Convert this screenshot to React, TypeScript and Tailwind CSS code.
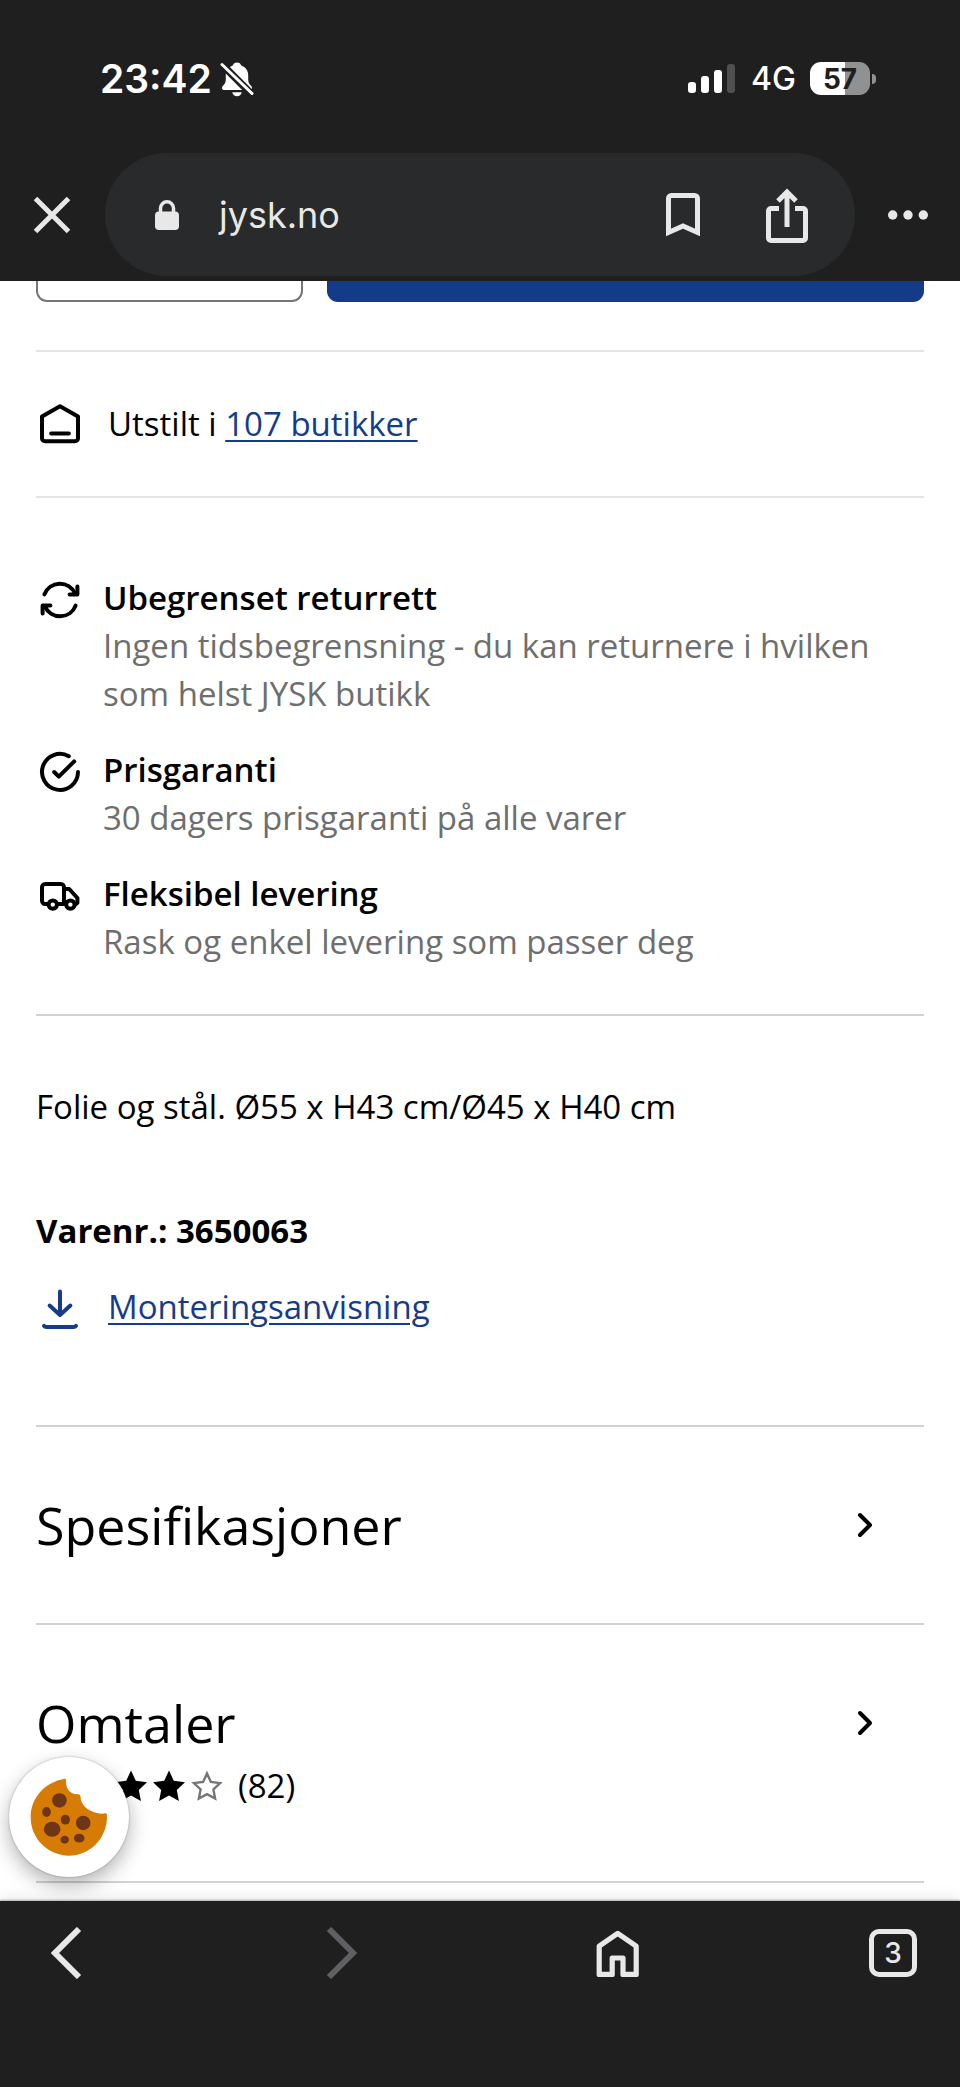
import type { ReactNode } from "react";

function LineIcon({ children }: { children: ReactNode }) {
  return (
    <svg viewBox="0 0 24 24" className="mt-0.5 size-12 shrink-0" fill="none" stroke="currentColor" strokeWidth="2" strokeLinecap="round" strokeLinejoin="round" aria-hidden="true">
      {children}
    </svg>
  );
}

const benefits = [
  {
    title: "Ubegrenset returrett",
    text: "Ingen tidsbegrensning - du kan returnere i hvilken som helst JYSK butikk",
    icon: (
      <>
        <path d="M4.2 9.2A8.3 8.3 0 0 1 19.5 8.7" />
        <path d="M20.7 5.2v4h-3.9" />
        <path d="M19.8 14.8A8.3 8.3 0 0 1 4.5 15.3" />
        <path d="M3.3 18.8v-4h3.9" />
      </>
    ),
  },
  {
    title: "Prisgaranti",
    text: "30 dagers prisgaranti på alle varer",
    icon: (
      <>
        <path d="M16.4 4.1A9 9 0 1 0 21 12" />
        <path d="M9.1 12l2.3 2.3 7.7-7.6" />
      </>
    ),
  },
  {
    title: "Fleksibel levering",
    text: "Rask og enkel levering som passer deg",
    icon: (
      <>
        <path d="M6 16H4.6A1.6 1.6 0 0 1 3 14.4V7.6A1.6 1.6 0 0 1 4.6 6h7.8A1.6 1.6 0 0 1 14 7.6V16h-3.4" />
        <path d="M14 8.5h2.6L20.7 13v2.4l-1.2.9" />
        <circle cx="8.4" cy="16.3" r="2.1" />
        <circle cx="17.2" cy="16.3" r="2.1" />
      </>
    ),
  },
];

function StatusBar() {
  return (
    <div className="flex h-[153px] items-center justify-between pt-1 pr-[84px] pl-[100px] text-white">
      <div className="flex items-center gap-2">
        <span className="text-[39px] leading-12 font-semibold">23:42</span>
        <svg viewBox="0 0 34 36" className="h-9 w-[34px]" aria-label="Lydløs" role="img">
          <path fill="#fff" d="M17 1.5c2.2 0 3.7 1.2 4.2 2.9 4.4 1.6 7 5 7 9.8v4.2c0 3 1.2 4.6 3 6.5 1.3 1.4 1.2 4-1.6 4H4.4c-2.8 0-2.9-2.6-1.6-4 1.8-1.9 3-3.5 3-6.5v-4.2c0-4.8 2.6-8.2 7-9.8.5-1.7 2-2.9 4.2-2.9z" />
          <path fill="#fff" d="M12.3 31.2h9.4c-.5 2.6-2.4 4-4.7 4s-4.2-1.4-4.7-4z" />
          <path stroke="#1f1f1f" strokeWidth="7.5" d="M1 2.5l32 32" />
          <path stroke="#fff" strokeWidth="3" strokeLinecap="round" d="M2 3.5l30 29" />
        </svg>
      </div>
      <div className="flex items-center">
        <div className="flex items-end gap-[5px]">
          <span className="h-[11px] w-2 rounded-[3px] bg-white" />
          <span className="h-[17px] w-2 rounded-[3px] bg-white" />
          <span className="h-[23px] w-2 rounded-[3px] bg-white" />
          <span className="h-[29px] w-2 rounded-[3px] bg-[#505050]" />
        </div>
        <span className="ml-4 text-[32px] leading-10 font-medium">4G</span>
        <div className="ml-3.5 flex h-[33px] w-[60px] items-center justify-center rounded-[11px] bg-linear-to-r from-white from-58% to-[#919191] to-58% text-[28px] leading-8 font-bold text-[#1f1f1f]">
          57
        </div>
        <span className="ml-0.5 h-2.5 w-1 rounded-r-full bg-[#919191]" />
      </div>
    </div>
  );
}

function AddressBar() {
  return (
    <div className="flex items-center pb-[5px] text-[#e8e8e8]">
      <button aria-label="Lukk" className="flex h-[123px] w-[105px] items-center pl-[33px]">
        <svg viewBox="0 0 38 38" className="size-[38px]" stroke="currentColor" strokeWidth="5">
          <path d="M2.5 2.5l33 33M35.5 2.5l-33 33" />
        </svg>
      </button>
      <div className="flex h-[123px] flex-1 items-center rounded-full bg-[#282a2b] pr-[45px] pl-[50px]">
        <svg viewBox="0 0 24 30" className="h-[30px] w-6" aria-hidden="true">
          <path fill="none" stroke="currentColor" strokeWidth="3.5" d="M5.5 13V8.3a6.5 6.5 0 0 1 13 0V13" />
          <rect y="11.5" width="24" height="18.5" rx="4" fill="currentColor" />
        </svg>
        <span className="ml-10 flex-1 text-[36px] leading-12">jysk.no</span>
        <button aria-label="Legg til bokmerke" className="mr-16">
          <svg viewBox="0 0 34 44" className="h-11 w-[34px]" fill="none" stroke="currentColor" strokeWidth="5">
            <path d="M2.5 39.5V5.5a3 3 0 0 1 3-3h23a3 3 0 0 1 3 3v34L17 33z" />
          </svg>
        </button>
        <button aria-label="Del">
          <svg viewBox="0 0 46 56" className="h-14 w-[46px]" fill="none" stroke="currentColor" strokeWidth="5">
            <path d="M15 21.5H7a2.5 2.5 0 0 0-2.5 2.5v27A2.5 2.5 0 0 0 7 53.5h32a2.5 2.5 0 0 0 2.5-2.5V24a2.5 2.5 0 0 0-2.5-2.5h-8" />
            <path d="M23 40V5M14 14l9-9 9 9" />
          </svg>
        </button>
      </div>
      <button aria-label="Mer" className="flex h-[123px] w-[105px] items-center justify-center">
        <svg viewBox="0 0 40 10" className="h-2.5 w-10" fill="currentColor">
          <circle cx="4.7" cy="5" r="4.7" />
          <circle cx="20" cy="5" r="4.7" />
          <circle cx="35.3" cy="5" r="4.7" />
        </svg>
      </button>
    </div>
  );
}

function Star({ filled }: { filled: boolean }) {
  return (
    <svg viewBox="0 0 38 38" className="size-[38px]" aria-hidden="true">
      {filled ? (
        <path d="M19 3.5l4.8 10.3 11.2 1.4-8.2 7.7 2.1 11.1L19 28.6 9.1 34l2.1-11.1L3 15.2l11.2-1.4z" />
      ) : (
        <path fill="none" stroke="#767676" strokeWidth="2.4" d="M19 6.5l3.9 8.5 9.2 1.1-6.7 6.4 1.7 9.1-8.1-4.4-8.1 4.4 1.7-9.1-6.7-6.4 9.2-1.1z" />
      )}
    </svg>
  );
}

function Section({ title, children }: { title: string; children?: ReactNode }) {
  return (
    <button className="block w-full border-b-2 border-[#d2d2d2] pt-[62px] text-left">
      <span className="flex items-center justify-between pr-9">
        <span className="text-[52px] leading-18">{title}</span>
        <svg viewBox="0 0 24 24" className="size-12" fill="none" stroke="currentColor" strokeWidth="2" strokeLinecap="round" strokeLinejoin="round" aria-hidden="true">
          <path d="M10 7l5 5-5 5" />
        </svg>
      </span>
      {children}
    </button>
  );
}

function CookieButton() {
  return (
    <button aria-label="Informasjonskapsler" className="absolute bottom-6 left-[9px] flex size-[120px] items-center justify-center rounded-full bg-white shadow-[0_8px_20px_rgba(0,0,0,0.3),0_0_2px_rgba(60,100,150,0.5)]">
      <svg viewBox="0 0 234 236" className="size-[78px]">
        <path fill="#d67c05" d="M106 2C45 10 1 60 1 119c0 64 52 116 116 116 60 0 115-50 115-118 0-6 0-11-6-10-8 2-17 1-24-1-30-7-50-25-50-49 0-6-3-9-10-8-22-1-35-16-34-40 0-5 0-7-2-7z" />
        <g fill="#6f3517">
          <ellipse cx="88" cy="68" rx="22" ry="22" />
          <ellipse cx="49" cy="103" rx="13" ry="15" />
          <ellipse cx="106" cy="126" rx="14" ry="15" />
          <ellipse cx="66" cy="155" rx="25" ry="23" />
          <ellipse cx="160" cy="136" rx="22" ry="22" />
          <ellipse cx="104" cy="187" rx="13" ry="12" />
          <ellipse cx="148" cy="182" rx="16" ry="13" />
        </g>
      </svg>
    </button>
  );
}

function BottomNav() {
  return (
    <nav className="relative flex h-[186px] items-start justify-between bg-[#1f1f1f] px-[43px] pt-[26px] text-[#e8e8e8] shadow-[0_-1px_2px_rgba(0,0,0,0.3),0_-4px_14px_rgba(0,0,0,0.08)]">
      <button aria-label="Tilbake" className="flex h-[52px] w-12 items-center justify-center">
        <svg viewBox="0 0 32 52" className="h-[52px] w-8" fill="none" stroke="currentColor" strokeWidth="6">
          <path d="M28 2L4 26l24 24" />
        </svg>
      </button>
      <button aria-label="Fremover" disabled className="flex h-[52px] w-12 items-center justify-center text-[#606064]">
        <svg viewBox="0 0 32 52" className="h-[52px] w-8" fill="none" stroke="currentColor" strokeWidth="6">
          <path d="M3 2l24 24L3 50" />
        </svg>
      </button>
      <button aria-label="Hjem" className="flex h-[52px] w-12 items-center justify-center">
        <svg viewBox="0 0 48 52" className="h-[52px] w-12" fill="none" stroke="currentColor" strokeWidth="5.2" strokeLinejoin="round">
          <path d="M23.7 6.3L5.2 19.2v28.2h13V31H29v16.4h13.2V19.2z" />
        </svg>
      </button>
      <button aria-label="Faner" className="flex h-[52px] w-12 items-center justify-center">
        <span className="flex size-12 items-center justify-center rounded-[10px] border-5 border-[#e8e8e8] text-[28px] leading-8 font-medium">3</span>
      </button>
    </nav>
  );
}

export default function App() {
  return (
    <div className="flex min-h-screen flex-col bg-white font-['Inter',sans-serif] text-black">
      <header className="bg-[#1f1f1f]">
        <StatusBar />
        <AddressBar />
      </header>

      <main className="relative flex-1 px-9 pb-[18px] font-['Open_Sans',sans-serif] text-[33px] leading-12">
        {/* bottom edge of the buy row, scrolled under the address bar */}
        <div className="flex gap-6">
          <button aria-label="Antall" className="h-[21px] w-[267px] rounded-b-[11px] border-2 border-t-0 border-[#767676]" />
          <button aria-label="Legg i handlekurv" className="h-[21px] flex-1 rounded-b-[11px] bg-[#143a8a]" />
        </div>

        <div className="mt-12 flex items-center gap-6 border-y-2 border-[#e5e5e5] py-12">
          <svg viewBox="0 0 24 24" className="size-12 shrink-0" fill="none" stroke="currentColor" strokeWidth="2" strokeLinecap="round" strokeLinejoin="round" aria-hidden="true">
            <path d="M12 3.1L3 8.3v10.8a1.5 1.5 0 0 0 1.5 1.5h15a1.5 1.5 0 0 0 1.5-1.5V8.3z" />
            <path d="M7.6 16.8h8.8" />
          </svg>
          <p>
            Utstilt i <a href="#butikker" className="text-[#143c8a] underline decoration-2 underline-offset-4">107 butikker</a>
          </p>
        </div>

        <ul className="flex flex-col gap-7 border-b-2 border-[#d2d2d2] pt-[76px] pb-12">
          {benefits.map((benefit) => (
            <li key={benefit.title} className="flex gap-[19px]">
              <LineIcon>{benefit.icon}</LineIcon>
              <div>
                <h3 className="font-semibold">{benefit.title}</h3>
                <p className="text-[#6e6e6e]">{benefit.text}</p>
              </div>
            </li>
          ))}
        </ul>

        <div className="border-b-2 border-[#d2d2d2] pt-[67px] pb-[94px]">
          <p>Folie og stål. Ø55 x H43 cm/Ø45 x H40 cm</p>
          <p className="mt-[76px] font-bold">Varenr.: 3650063</p>
          <a href="#monteringsanvisning" className="mt-7 flex h-12 gap-6 text-[#143c8a]">
            <LineIcon>
              <path d="M12 3.3v11.4" />
              <path d="M6.8 10.3L12 15l5.2-4.7" />
              <path d="M4 20.4q.4.6 1.3.6h13.4q.9 0 1.3-.6" />
            </LineIcon>
            <span className="underline decoration-2 underline-offset-4">Monteringsanvisning</span>
          </a>
        </div>

        <Section title="Spesifikasjoner">
          <span className="block h-[62px]" />
        </Section>
        <Section title="Omtaler">
          <span className="flex items-center gap-3 pt-[3px] pb-[71px]">
            <span className="flex">
              {[1, 2, 3, 4, 5].map((n) => (
                <Star key={n} filled={n <= 4} />
              ))}
            </span>
            <span>(82)</span>
          </span>
        </Section>

        <CookieButton />
      </main>

      <BottomNav />
    </div>
  );
}
